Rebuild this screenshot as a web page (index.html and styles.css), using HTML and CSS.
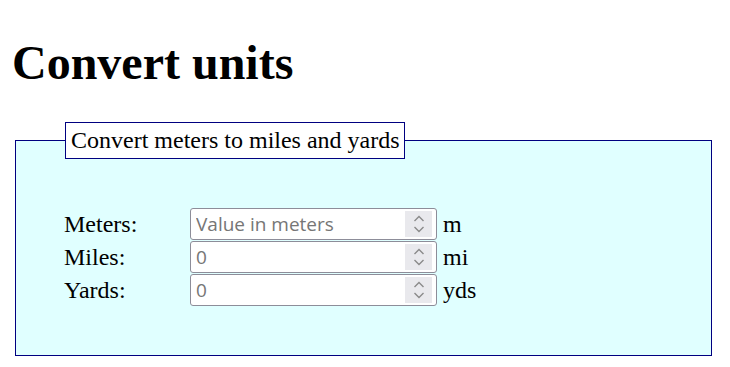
FILE: index.html
```html
<!DOCTYPE html>
<html lang="en">
<head>
    <meta charset="UTF-8">
    <meta name="viewport" content="width=device-width, initial-scale=1.0">
    <title>Convert units</title>
    <link rel="stylesheet" href="styles.css">
</head>
<body>
    <h1>Convert units</h1>
    <fieldset class="converter">
        <legend>Convert meters to miles and yards</legend>
        <div class="rows">
            <label for="meters">Meters:</label>
            <div class="num">
                <input type="number" id="meters" placeholder="Value in meters">
                <span class="spin"><svg width="12" height="20" viewBox="0 0 12 20"><path d="M1.5 7l4.5-4.5 4.5 4.5M1.5 13l4.5 4.5 4.5-4.5" fill="none" stroke="#8a8a8a" stroke-width="1.4"/></svg></span>
            </div>
            <span class="unit">m</span>

            <label for="miles">Miles:</label>
            <div class="num">
                <input type="number" id="miles" placeholder="0" readonly>
                <span class="spin"><svg width="12" height="20" viewBox="0 0 12 20"><path d="M1.5 7l4.5-4.5 4.5 4.5M1.5 13l4.5 4.5 4.5-4.5" fill="none" stroke="#8a8a8a" stroke-width="1.4"/></svg></span>
            </div>
            <span class="unit">mi</span>

            <label for="yards">Yards:</label>
            <div class="num">
                <input type="number" id="yards" placeholder="0" readonly>
                <span class="spin"><svg width="12" height="20" viewBox="0 0 12 20"><path d="M1.5 7l4.5-4.5 4.5 4.5M1.5 13l4.5 4.5 4.5-4.5" fill="none" stroke="#8a8a8a" stroke-width="1.4"/></svg></span>
            </div>
            <span class="unit">yds</span>
        </div>
    </fieldset>
</body>
</html>
```

FILE: styles.css
```css
body {
    font-family: "Liberation Serif", "Times New Roman", serif;
    margin: 10px;
    color: #000;
}
h1 {
    font-size: 48px;
    font-weight: bold;
    margin: 25px 0 32px 2px;
}
.converter {
    margin: 0 8px 0 5px;
    padding: 49px 48px 49px;
    background-color: #e0ffff;
    border: 1px solid #000080;
}
legend {
    font-size: 24px;
    padding: 4px 4px 4px 5px;
    margin-left: 1px;
    background-color: #fff;
    border: 1px solid #000080;
}
.rows {
    display: grid;
    grid-template-columns: 126px 247px auto;
    row-gap: 1px;
    align-items: center;
    font-size: 24px;
}
.num {
    display: flex;
    align-items: center;
    height: 32px;
    box-sizing: border-box;
    background-color: #fff;
    border: 1px solid #8d8d99;
    border-radius: 3px;
    padding-right: 4px;
}
.num input {
    flex: 1;
    min-width: 0;
    border: none;
    outline: none;
    padding: 0 5px;
    height: 100%;
    background: transparent;
    font-family: "Open Sans", "Noto Sans", sans-serif;
    font-size: 19px;
    -moz-appearance: textfield;
}
.num input::-webkit-inner-spin-button,
.num input::-webkit-outer-spin-button {
    -webkit-appearance: none;
    margin: 0;
}
.num input::placeholder {
    color: #767676;
}
.spin {
    display: flex;
    align-items: center;
    justify-content: center;
    width: 27px;
    height: 26px;
    background-color: #e9e9ed;
}
.unit {
    padding-left: 6px;
}
```
